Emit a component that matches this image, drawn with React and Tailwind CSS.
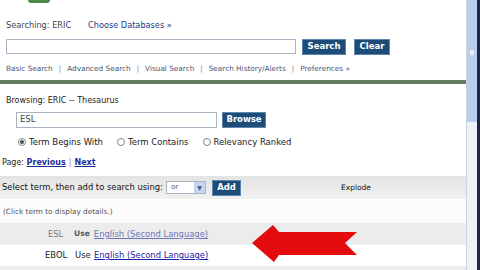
import React from 'react'

const font = { fontFamily: '"DejaVu Sans", Verdana, sans-serif' }

const Btn = ({ children, className = '' }) => (
    <div className={`flex items-center justify-center h-[16px] bg-[#1d4c78] border border-[#5f86ad] text-white font-bold text-[8.5px] ${className}`}>
        {children}
    </div>
)

const Radio = ({ checked, label }) => (
    <div className="flex items-center gap-[3px]">
        <div className="w-[8px] h-[8px] rounded-full border border-[#7a8a9a] bg-white flex items-center justify-center">
            {checked ? <div className="w-[4px] h-[4px] rounded-full bg-[#3a5a3a]" /> : null}
        </div>
        <span>{label}</span>
    </div>
)

const App = () => {
    const navLinks = ['Basic Search', 'Advanced Search', 'Visual Search', 'Search History/Alerts', 'Preferences »']

    return (
        <div className="w-[480px] h-[270px] overflow-hidden bg-white flex text-[#333] text-[7px] whitespace-nowrap" style={font}>
            <div className="w-[466px] flex flex-col relative">
                {/* logo bottom */}
                <div className="h-[20px] pl-[28px]">
                    <div className="w-[22px] h-[3px] bg-[#4f8a4a] rounded-b-[3px]" />
                </div>
                <div className="flex items-center h-[10px] pl-[6px] text-[8.2px]">
                    <span className="w-[82px] text-[#444]">Searching: ERIC</span>
                    <span className="text-[#243a8a]">Choose Databases »</span>
                </div>
                <div className="flex items-center h-[17px] mt-[8px] pl-[6px]">
                    <div className="w-[290px] h-[15px] border border-[#a9b4c2] bg-white" />
                    <Btn className="ml-[6px] w-[44px]">Search</Btn>
                    <Btn className="ml-[8px] w-[36px]">Clear</Btn>
                </div>
                <div className="flex items-center h-[12px] mt-[8px] pl-[6px] text-[#4a5672] text-[7.3px]">
                    {navLinks.map((l, i) => (
                        <React.Fragment key={l}>
                            {i > 0 ? <span className="mx-[6px] text-[#888]">|</span> : null}
                            <span>{l}</span>
                        </React.Fragment>
                    ))}
                </div>
                <div className="h-[4px] mt-[5px] bg-[#627c5f]" />

                <div className="flex items-center h-[10px] mt-[12px] pl-[6px] text-[#222] text-[8px]">
                    Browsing: ERIC -- Thesaurus
                </div>
                <div className="flex items-center h-[17px] mt-[5px] pl-[16px]">
                    <div className="w-[201px] h-[16px] border border-[#a9b4c2] bg-white flex items-center pl-[3px] text-[8.5px] text-[#444]">ESL</div>
                    <Btn className="ml-[5px] w-[44px]">Browse</Btn>
                </div>
                <div className="flex items-center h-[10px] mt-[9px] pl-[18px] gap-[14px] text-[#222] text-[8.5px]">
                    <Radio checked label="Term Begins With" />
                    <Radio label="Term Contains" />
                    <Radio label="Relevancy Ranked" />
                </div>
                <div className="flex items-center h-[10px] mt-[11px] pl-[2px] text-[#222] text-[8px]">
                    <span>Page:&nbsp;</span>
                    <span className="text-[#1f2f9a] underline font-bold">Previous</span>
                    <span className="mx-[3px] text-[#888]">|</span>
                    <span className="text-[#1f2f9a] underline font-bold">Next</span>
                </div>

                <div className="flex items-center h-[23px] mt-[8px] pl-[2px] bg-gradient-to-b from-[#e3e3e3] to-[#f1f1f1] text-[#111] text-[8.4px]">
                    <span className="w-[164px]">Select term, then add to search using:</span>
                    <div className="w-[40px] h-[13px] border border-[#a9b4c2] bg-white flex items-center justify-between pl-[4px] text-[7px]">
                        <span className="text-[#555]">or</span>
                        <div className="w-[11px] h-[11px] bg-[#c6d6ee] flex items-center justify-center text-[#3d5b8c] text-[6px]">▼</div>
                    </div>
                    <Btn className="ml-[6px] w-[29px]">Add</Btn>
                    <span className="ml-[100px] text-[7.5px]">Explode</span>
                </div>
                <div className="flex items-center h-[22px] mt-[2px] pl-[3px] bg-[#fcfcfc] text-[#555] text-[7.3px]">
                    (Click term to display details.)
                </div>
                <div className="flex items-center h-[22px] pl-[48px] bg-[#ececec] text-[#777] text-[8.4px]">
                    <span className="w-[26px]">ESL</span>
                    <span className="mr-[4px] font-bold text-[#555] text-[7.6px]">Use</span>
                    <span className="underline text-[#6a76b8]">English (Second Language)</span>
                </div>
                <div className="flex items-center h-[21px] pl-[45px] bg-white text-[#222] text-[8.4px]">
                    <span className="w-[30px]">EBOL</span>
                    <span className="w-[19px]">Use</span>
                    <span className="underline text-[#1a22a8]">English (Second Language)</span>
                </div>
                <div className="flex-1 bg-[#ececec]" />

                <svg className="absolute left-[250px] top-[222px]" width="110" height="42" viewBox="0 0 110 42">
                    <polygon points="2,21 23,3 29,10 107,10 95,21 107,33 29,33 24,40" fill="#e30b0b" />
                </svg>
            </div>
            <div className="w-[11px] flex flex-col border-l border-[#c9d4e4]">
                <div className="h-[122px] bg-[#b9cdec] relative">
                    <div className="absolute left-[3px] top-[50px] w-[4px] h-[5px] bg-[#e8eef8]" />
                </div>
                <div className="flex-1 bg-[#eef1f6]" />
            </div>
            <div className="flex-1 bg-[#1b2744]" />
        </div>
    )
}

export default App
